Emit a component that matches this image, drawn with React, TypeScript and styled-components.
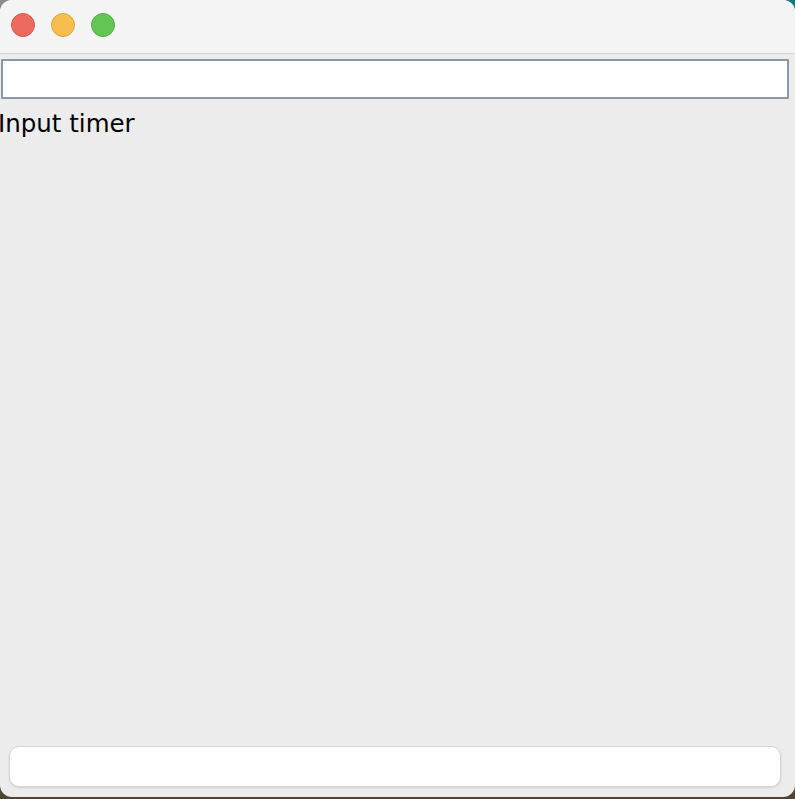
import React from "react";
import styled, { createGlobalStyle } from "styled-components";

const Global = createGlobalStyle`
  html, body { margin: 0; padding: 0; }
  body {
    width: 795px;
    height: 799px;
    overflow: hidden;
    background:
      linear-gradient(to bottom, transparent 0 50%, #4f4236 50% 100%),
      linear-gradient(to right, #8c8c8c 0%, #6f8890 50%, #1d7483 100%);
  }
`;

const Window = styled.div`
  width: 795px;
  height: 797px;
  border-radius: 12px;
  overflow: hidden;
  display: flex;
  flex-direction: column;
  background: #ececec;
  font-family: "DejaVu Sans", "Liberation Sans", sans-serif;
`;

const TitleBar = styled.div`
  flex: none;
  background: #f4f4f4;
  border-bottom: 1px solid #d3d3d3;
  display: flex;
  align-items: center;
  gap: 16px;
  padding: 0 0 4px 11px;
  box-sizing: border-box;
  height: 54px;
`;

const Light = styled.span<{ $fill: string; $edge: string }>`
  width: 24px;
  height: 24px;
  border-radius: 50%;
  box-sizing: border-box;
  background: ${(p) => p.$fill};
  border: 1px solid ${(p) => p.$edge};
`;

const Content = styled.div`
  flex: 1;
  display: flex;
  flex-direction: column;
  padding-top: 5px;
`;

const TextInput = styled.input`
  margin: 0 6px 0 1px;
  height: 40px;
  box-sizing: border-box;
  border: 2px solid #8b97a8;
  border-radius: 1px;
  background: #ffffff;
  outline: none;
  font-size: 16px;
`;

const Label = styled.div`
  margin: 10px 0 0 -2px;
  font-size: 24.5px;
  line-height: 30px;
  color: #000;
`;

const StatusBox = styled.div`
  margin: auto 14px 10px 9px;
  height: 41px;
  background: #ffffff;
  border: 1px solid #d6d6d6;
  border-radius: 10px;
  box-shadow: 0 1px 2px rgba(0, 0, 0, 0.12);
  box-sizing: border-box;
`;

export default function App() {
  return (
    <>
      <Global />
      <Window>
        <TitleBar>
          <Light $fill="#ee6a5f" $edge="#d9574c" />
          <Light $fill="#f6be4f" $edge="#dea53a" />
          <Light $fill="#62c554" $edge="#52ad45" />
        </TitleBar>
        <Content>
          <TextInput type="text" />
          <Label>Input timer</Label>
          <StatusBox />
        </Content>
      </Window>
    </>
  );
}
